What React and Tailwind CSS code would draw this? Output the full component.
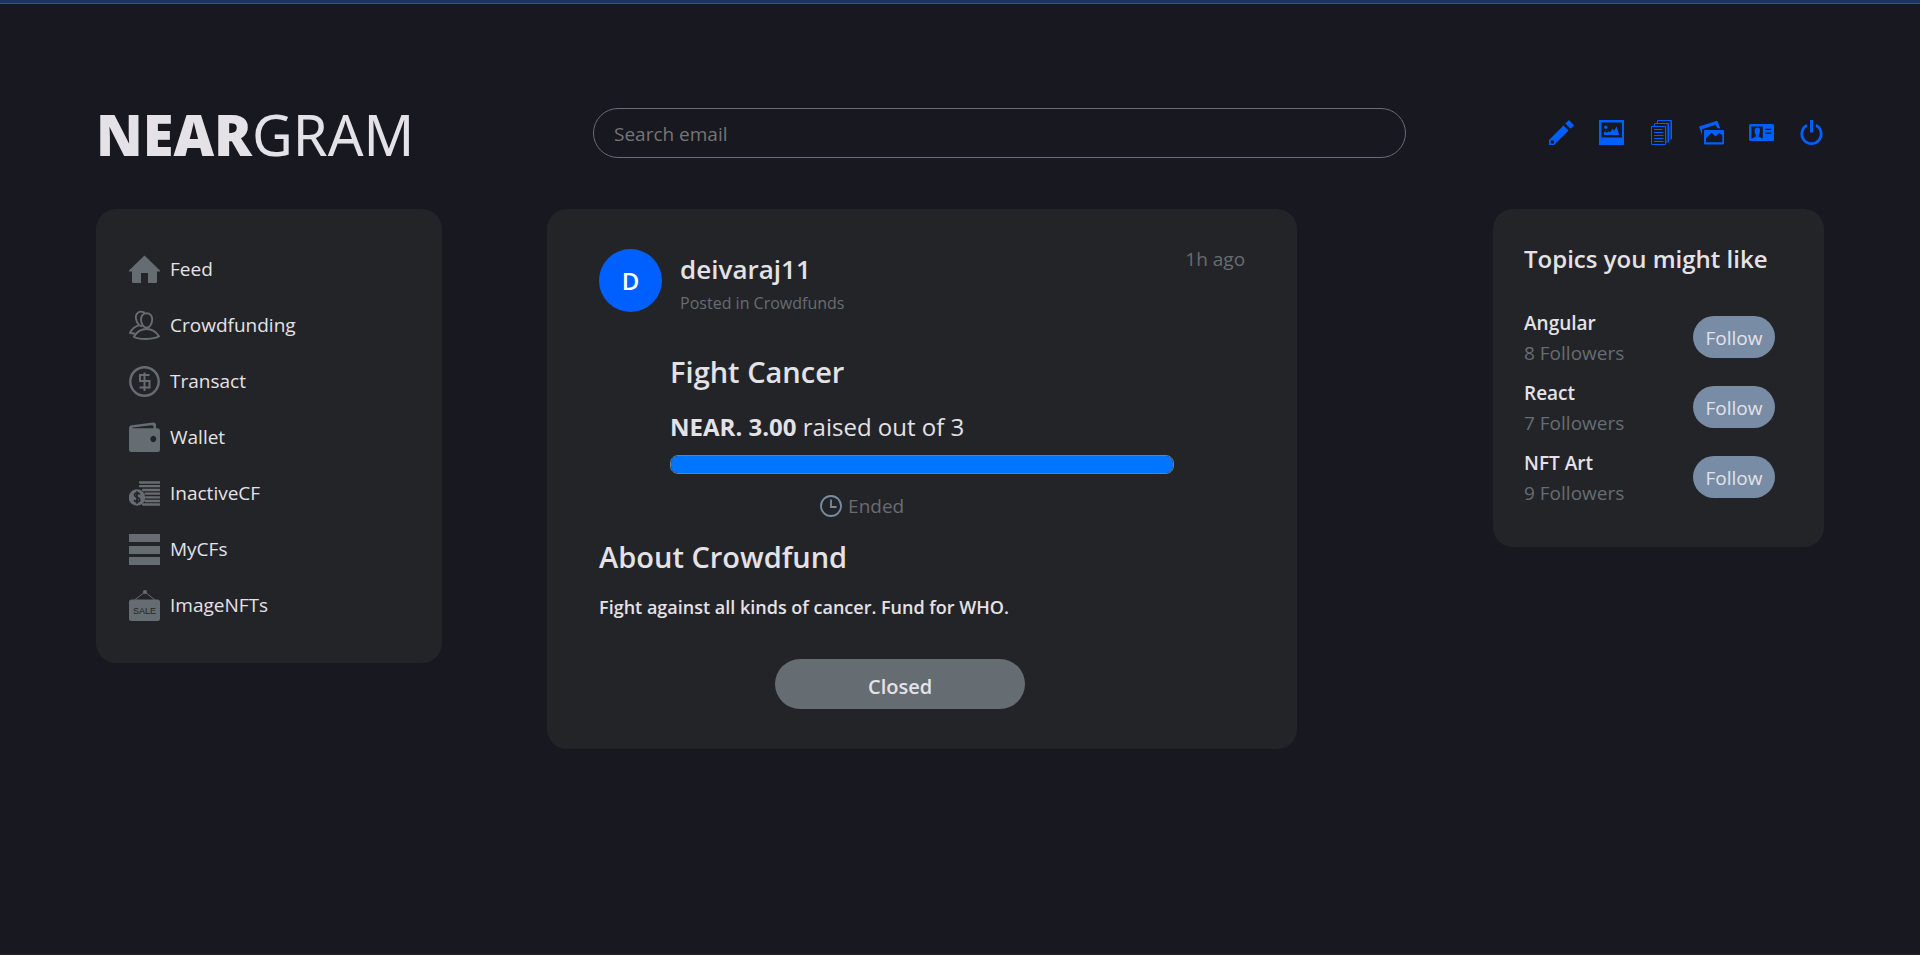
import React, { useState } from 'react';

const HomeIcon = () => (
  <svg viewBox="0 0 31 31" className="w-[31px] h-[31px] fill-current">
    <path d="M15.5 1.500 31 16.500v1h-3v10.200q0 1.300-1.300 1.300H19V19h-7v10H4.300Q3 29 3 27.700V17.500H0v-1Z" />
  </svg>
);

const PeopleIcon = () => (
  <svg viewBox="0 0 31 31" className="w-[31px] h-[31px] fill-none stroke-current" strokeWidth="1.900" strokeLinejoin="round" strokeLinecap="round">
    <path d="M17.600 3.300c3.700 0 5.800 2.500 5.600 6.500-.2 4-2.400 8-5.600 8s-5.400-4-5.600-8c-.2-4 1.900-6.500 5.600-6.500Z" />
    <path d="M4.800 26.800C8 21.500 12.500 19 17.500 19s9.500 2.500 12.500 7.300c-5 3.400-20.500 3.600-25.200.5Z" />
    <path d="M15 2.300C10.500.3 6.500 3 6.800 7.800c.2 2.800 1.300 5.200 3.200 7.400-3.800 1.300-7.200 3.800-9 7.800l4 .5M10 15.200l2.500 1" />
  </svg>
);

const DollarIcon = () => (
  <svg viewBox="0 0 31 31" className="w-[31px] h-[31px] fill-none stroke-current">
    <circle cx="15.500" cy="15.500" r="14.200" strokeWidth="2.400" />
    <path d="M20.500 9H11v6h9.500v6.500h-10M15.500 6.500v18.500" strokeWidth="2" />
  </svg>
);

const WalletIcon = () => (
  <svg viewBox="0 0 31 31" className="w-[31px] h-[31px] fill-current">
    <path fillRule="evenodd" d="M0 6.500Q0 3.600 2.800 3.300L24 .5Q27 .3 27 3v3.300h1.500Q31 6.500 31 9v18.500q0 2.500-2.500 2.500h-26Q0 30 0 27.500ZM3.500 6.200H24.500V4.800Q24.500 3 22.800 3.200L3.500 5.400ZM24.300 13.800a3 3.200 0 1 0 .01 0Z" />
  </svg>
);

const CoinsIcon = () => (
  <svg viewBox="0 0 31 31" className="w-[31px] h-[31px]">
    <path d="M11 4.500h19.500M11 8.200h19.500M14 12h16.500M16.500 15.700h14M17 19.300h13.500M16.500 23h14M14 26.500h16.500" className="stroke-current" strokeWidth="2.300" strokeLinecap="round" />
    <circle cx="8" cy="19.500" r="8.300" className="fill-current" />
    <path d="M10.800 16.500C9.500 14.300 5.300 14.500 5.500 17c.2 2.600 5.300 1.800 5.300 4.700 0 2.600-4.300 2.800-5.700.3M8 13.300v12.400" className="fill-none stroke-[#232428]" strokeWidth="1.700" />
  </svg>
);

const BarsIcon = () => (
  <svg viewBox="0 0 31 31" className="w-[31px] h-[31px] fill-current">
    <path d="M0 0h31v8H0ZM0 12h31v8H0ZM0 23h31v8H0Z" />
  </svg>
);

const SaleIcon = () => (
  <svg viewBox="0 0 31 31" className="w-[31px] h-[31px]">
    <path d="M5.500 10 16 2 26 10" className="fill-none stroke-current" strokeWidth="1" />
    <circle cx="16" cy="2" r="2" className="fill-current" />
    <rect y="9.500" width="31" height="21.500" rx="2.500" className="fill-current" />
    <text x="15.500" y="24" textAnchor="middle" fontSize="9" fontFamily="Liberation Sans, sans-serif" className="fill-[#232428]">SALE</text>
  </svg>
);

const PencilIcon = () => (
  <svg viewBox="0 0 25 25" className="w-[25px] h-[25px] fill-current">
    <path fillRule="evenodd" d="M20 0 25 5.200 21.500 8.800 16.300 3.600ZM14.500 5.500 19.500 10.500 5 25H0V20ZM2 20.200 1.500 22.500 2.700 23.700 5 23.200 4.800 20.500Z" />
  </svg>
);

const PictureIcon = () => (
  <svg viewBox="0 0 25 25" className="w-[25px] h-[25px] fill-current">
    <path fillRule="evenodd" d="M0 0h25v25H0ZM2.500 2.500v15h20.500v-15Z" />
    <circle cx="6.800" cy="7.300" r="1.700" />
    <path d="M5 15v-2.700l1.500-.8 1.300 1.200 2-1.500 1.500 1.300 2.200-4 1.500 2.500 2.500-4.500L20.300 15Z" />
  </svg>
);

const PagesIcon = () => (
  <svg viewBox="0 0 25 25" className="w-[25px] h-[25px] fill-none stroke-current">
    <path d="M8.500 3V.5h14V19H20.500M5.500 6V3.500h14V22H17" strokeWidth="1" />
    <path d="M21.500 1v17.500M18.500 4v17.500" strokeWidth="1.600" opacity=".55" />
    <path d="M2.500 6.500h14v18h-14Z" strokeWidth="1" />
    <path d="M5 9.500h8.500M5 12.500h9.500M5 15.500h9.500M5 18.500h9.500M5 21.500h9.500" strokeWidth="1" />
  </svg>
);

const GalleryIcon = () => (
  <svg viewBox="0 0 25 25" className="w-[25px] h-[25px] fill-current">
    <path d="M0 6.500 18.300.8 21.200 8.300H18.200L16.800 4.800 3 9.300V15Z" />
    <path fillRule="evenodd" d="M6 10h18q1 0 1 1v12.500q0 1-1 1H6q-1 0-1-1V11q0-1 1-1ZM7 22.300H23.300V15.500L20.500 13 16.500 16.500 12.500 12.700 9.500 16 7 18.500Z" />
  </svg>
);

const IdIcon = () => (
  <svg viewBox="0 0 25 25" className="w-[25px] h-[25px] fill-current">
    <path fillRule="evenodd" d="M1.500 4h22Q25 4 25 5.500v14q0 1.500-1.500 1.500h-22Q0 21 0 19.500v-14Q0 4 1.500 4ZM2.500 6.500v12.200L6.800 16.500V15Q5.500 13 5.500 10.500T8.300 7.500 11 10.500 9.800 15v1.500L13.800 18.700V6.500ZM16.300 8.700v1.200h6V8.700ZM16.300 12.500v1.200h6v-1.200Z" />
  </svg>
);

const PowerIcon = () => (
  <svg viewBox="0 0 25 25" className="w-[25px] h-[25px] fill-none stroke-current">
    <path d="M8 5.300a9.700 9.700 0 1 0 9 0" strokeWidth="2.700" />
    <path d="M12.500 0v12.500" strokeWidth="3" />
  </svg>
);

const ClockIcon = () => (
  <svg viewBox="0 0 22 22" className="w-[22px] h-[22px] fill-none stroke-[#788ca5]" strokeWidth="1.800">
    <circle cx="11" cy="11" r="10" />
    <path d="M11 4.500v7.500h5.500" />
  </svg>
);

const menu = [
  { label: 'Feed', icon: HomeIcon },
  { label: 'Crowdfunding', icon: PeopleIcon },
  { label: 'Transact', icon: DollarIcon },
  { label: 'Wallet', icon: WalletIcon },
  { label: 'InactiveCF', icon: CoinsIcon },
  { label: 'MyCFs', icon: BarsIcon },
  { label: 'ImageNFTs', icon: SaleIcon },
];

const actions = [
  { label: 'Write post', icon: PencilIcon },
  { label: 'Post image', icon: PictureIcon },
  { label: 'My posts', icon: PagesIcon },
  { label: 'Gallery', icon: GalleryIcon },
  { label: 'Profile', icon: IdIcon },
  { label: 'Log out', icon: PowerIcon },
];

const topics = [
  { name: 'Angular', followers: 8 },
  { name: 'React', followers: 7 },
  { name: 'NFT Art', followers: 9 },
];

function Header() {
  const [email, setEmail] = useState('');

  return (
    <header className="grid grid-cols-[497fr_813fr_418fr] items-center">
      <h1 className="pt-[2px] text-[56px] leading-[48px] font-['Noto_Sans','Open_Sans',sans-serif]">
        <span className="font-black">NEAR</span>GRAM
      </h1>
      <input
        type="email"
        aria-label="Search email"
        placeholder="Search email"
        value={email}
        onChange={(e) => setEmail(e.target.value)}
        className="w-full h-[50px] px-5 pt-[2px] rounded-full border border-[#666d78] bg-transparent text-[19px] outline-none placeholder:text-[#757575]"
      />
      <nav className="flex justify-end gap-[25px] pb-px text-[#0060ff]">
        {actions.map(({ label, icon: Icon }) => (
          <button key={label} aria-label={label}>
            <Icon />
          </button>
        ))}
      </nav>
    </header>
  );
}

function Sidebar() {
  return (
    <nav className="rounded-[20px] bg-[#232428] px-8 pt-8 pb-[30px]">
      {menu.map(({ label, icon: Icon }) => (
        <a key={label} href="#" className="flex items-center gap-[10px] h-14 px-px text-[19px]">
          <span className="text-[#666d72]">
            <Icon />
          </span>
          {label}
        </a>
      ))}
    </nav>
  );
}

function Crowdfund() {
  return (
    <article className="w-full max-w-[750px] rounded-[20px] bg-[#232428] px-[52px] py-10">
      <div className="flex items-start">
        <div className="flex items-center justify-center w-[63px] h-[63px] rounded-full bg-[#0060ff] text-white text-2xl font-semibold">D</div>
        <div className="ml-[18px]">
          <h2 className="text-[26px] leading-10 font-semibold">deivaraj11</h2>
          <p className="text-base leading-7 text-[#666d72]">Posted in Crowdfunds</p>
        </div>
        <span className="ml-auto text-[19px] leading-5 text-[#666d72]">1h ago</span>
      </div>

      <div className="ml-[71px] mt-[35px]">
        <h2 className="text-[29px] leading-10 font-semibold">Fight Cancer</h2>
        <p className="mt-[15px] text-2xl leading-10">
          <span className="font-bold">NEAR. 3.00</span> raised out of 3
        </p>
        <progress
          value="3"
          max="3"
          aria-label="Funds raised"
          className="block mt-2 w-[504px] max-w-full h-[19px] appearance-none overflow-hidden rounded-[8px] border border-[#6d7f95] [&::-webkit-progress-bar]:bg-transparent [&::-webkit-progress-value]:bg-[#0075ff]"
        />
        <p className="flex items-center gap-[6px] mt-[18px] ml-[150px] text-[19px] leading-7 font-medium text-[#666d72]">
          <ClockIcon /> Ended
        </p>
      </div>

      <h2 className="mt-[17px] text-[29px] leading-10 font-semibold">About Crowdfund</h2>
      <p className="mt-4 text-lg leading-7 font-semibold">Fight against all kinds of cancer. Fund for WHO.</p>
      <button className="block mt-[38px] ml-[176px] w-[250px] h-[50px] pt-[6px] rounded-full bg-[#666d72] text-xl font-semibold">Closed</button>
    </article>
  );
}

function Topics() {
  return (
    <aside className="rounded-[20px] bg-[#232428] pl-[31px] pr-[49px] pt-8 pb-[35px]">
      <h2 className="mb-[25px] text-2xl leading-9 font-semibold whitespace-nowrap">Topics you might like</h2>
      <ul>
        {topics.map((t) => (
          <li key={t.name} className="flex items-center justify-between h-[70px]">
            <div className="pt-[2px]">
              <h3 className="text-[19px] leading-[30px] font-semibold">{t.name}</h3>
              <p className="text-[19px] leading-[30px] text-[#666d72]">{t.followers} Followers</p>
            </div>
            <button className="w-[82px] h-[42px] pt-[2px] rounded-full bg-[#788ca5] text-[19px]">Follow</button>
          </li>
        ))}
      </ul>
    </aside>
  );
}

export default function App() {
  return (
    <div className="flex flex-col min-h-screen bg-[#171820] text-[#e4e2e7] font-['Open_Sans','Noto_Sans',sans-serif]">
      <div className="h-1 bg-[#19365f] border-b border-[#38557f]" />
      <div className="grow px-[5%] pt-[104px] border-b-2 border-[#211f22]">
        <Header />
        <main className="grid grid-cols-[346fr_1051fr_331fr] items-start mt-[51px]">
          <Sidebar />
          <div className="pl-[10%]">
            <Crowdfund />
          </div>
          <Topics />
        </main>
      </div>
    </div>
  );
}
